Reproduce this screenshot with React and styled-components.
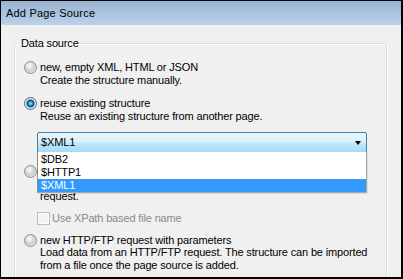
import React from "react";
import styled, { createGlobalStyle } from "styled-components";

const GlobalStyle = createGlobalStyle`
  html, body {
    margin: 0;
    padding: 0;
    background: #f0f0f0;
  }
  body {
    font-family: "Liberation Sans", Arial, sans-serif;
  }
`;

const Window = styled.div`
  width: 403px;
  height: 279px;
  box-sizing: border-box;
  border: 1px solid #000;
  border-right-width: 2px;
  border-bottom-width: 2px;
  display: flex;
  flex-direction: column;
  overflow: hidden;
  font-family: "Liberation Sans", Arial, sans-serif;
  font-size: 11px;
  letter-spacing: -0.15px;
  line-height: 12.5px;
  color: #000;
`;

const TitleBar = styled.div`
  flex: none;
  height: 24px;
  display: flex;
  align-items: center;
  padding: 0 0 1px 5px;
  box-sizing: border-box;
  background: linear-gradient(#99b2d0, #bad2eb);
  line-height: 14px;
  letter-spacing: 0.2px;
`;

const Body = styled.div`
  flex: 1;
  background: #f0f0f0;
  padding: 0 14px 0 13px;
  overflow: hidden;
`;

const GroupBox = styled.fieldset`
  margin: 11px 0 0;
  padding: 0;
  min-width: 0;
  height: 300px;
  border: 1px solid #d5dfe5;
  border-radius: 3px;
  box-shadow: inset 1px 1px 0 #fff, 1px 1px 0 #fff;
`;

const Legend = styled.legend`
  margin-left: 4px;
  padding: 0 2px;
  line-height: 14px;
`;

const Content = styled.div`
  display: flex;
  flex-direction: column;
  padding-left: 9px;
`;

const Option = styled.div`
  display: flex;
  align-items: flex-start;
  gap: 3px;
  margin-top: ${(p) => p.$top}px;
`;

const Radio = styled.span`
  flex: none;
  width: 13px;
  height: 13px;
  box-sizing: border-box;
  border-radius: 50%;
  border: 1px solid ${(p) => (p.$checked ? "#3d6f97" : "#8e8f8f")};
  background: ${(p) =>
    p.$checked
      ? "radial-gradient(circle at 50% 50%, #7cc8ee 0 1px, #2a85c2 2px, #134c7a 3.5px, #d9e6f0 4.5px, #f4f4f4 100%)"
      : "radial-gradient(circle at 40% 35%, #f6f6f6 0 1px, #dedede 3.5px, #cfcfcf 4.5px, #eeeeee 100%)"};
`;

const Label = styled.div`
  display: flex;
  flex-direction: column;
  white-space: nowrap;
`;

const ComboWrap = styled.div`
  position: relative;
  width: 330px;
  margin: 10px 0 0 13px;
`;

const Combo = styled.div`
  height: 21px;
  box-sizing: border-box;
  display: flex;
  align-items: center;
  justify-content: space-between;
  padding: 0 5px 0 3px;
  border: 1px solid #3c7fb1;
  border-radius: 2px;
  background: linear-gradient(#eaf6fd 0%, #d9f0fc 45%, #bee6fd 55%, #a7d9f5 100%);
`;

const Arrow = styled.span`
  width: 0;
  height: 0;
  border-left: 3.5px solid transparent;
  border-right: 3.5px solid transparent;
  border-top: 4px solid #000;
  margin-top: 1px;
`;

const List = styled.div`
  position: absolute;
  top: calc(100% - 1px);
  left: 0;
  right: 0;
  z-index: 2;
  background: #fff;
  border: 1px solid #a7a7a7;
  border-left-color: #8a8a8a;
  border-top: none;
  padding-top: 1px;
  box-shadow: 1px 1px 1px rgba(0, 0, 0, 0.08);
`;

const Item = styled.div`
  height: 13px;
  line-height: 13px;
  padding-left: 3px;
  background: ${(p) => (p.$selected ? "#3399ff" : "transparent")};
  color: ${(p) => (p.$selected ? "#fff" : "#000")};
`;

const CheckRow = styled.div`
  display: flex;
  align-items: center;
  gap: 2px;
  margin: 9px 0 0 13px;
  color: #8a8a8a;
`;

const Check = styled.span`
  flex: none;
  width: 13px;
  height: 13px;
  box-sizing: border-box;
  border: 1px solid #bcbcbc;
  background: #f4f4f4;
  box-shadow: inset 0 0 0 1px #fcfcfc;
`;

export default function App() {
  return (
    <>
      <GlobalStyle />
      <Window>
        <TitleBar>Add Page Source</TitleBar>
        <Body>
          <GroupBox>
            <Legend>Data source</Legend>
            <Content>
              <Option $top={11}>
                <Radio />
                <Label>
                  <span>new, empty XML, HTML or JSON</span>
                  <span>Create the structure manually.</span>
                </Label>
              </Option>
              <Option $top={11}>
                <Radio $checked />
                <Label>
                  <span>reuse existing structure</span>
                  <span>Reuse an existing structure from another page.</span>
                </Label>
              </Option>
              <ComboWrap>
                <Combo>
                  <span>$XML1</span>
                  <Arrow />
                </Combo>
                <List>
                  <Item>$DB2</Item>
                  <Item>$HTTP1</Item>
                  <Item $selected>$XML1</Item>
                </List>
              </ComboWrap>
              <Option $top={12}>
                <Radio />
                <Label>
                  <span>new HTTP/FTP request</span>
                  <span>Load data from an HTTP/FTP request. Structure is taken from the</span>
                  <span>request.</span>
                </Label>
              </Option>
              <CheckRow>
                <Check />
                <span>Use XPath based file name</span>
              </CheckRow>
              <Option $top={9}>
                <Radio />
                <Label>
                  <span>new HTTP/FTP request with parameters</span>
                  <span>Load data from an HTTP/FTP request. The structure can be imported</span>
                  <span>from a file once the page source is added.</span>
                </Label>
              </Option>
            </Content>
          </GroupBox>
        </Body>
      </Window>
    </>
  );
}
